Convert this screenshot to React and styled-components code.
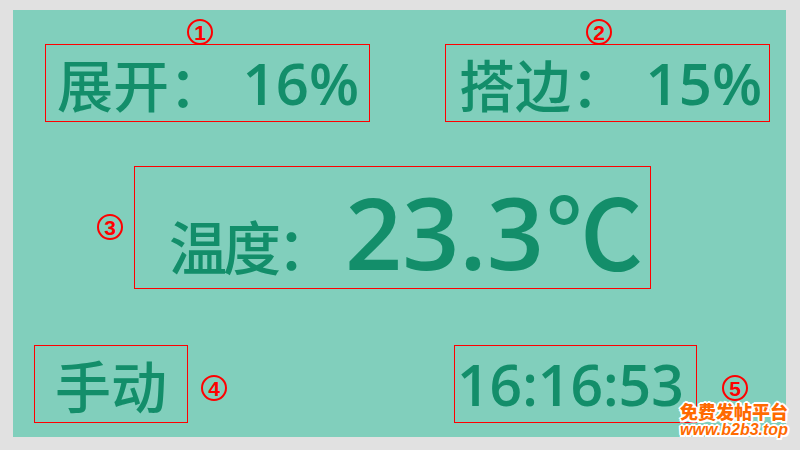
import React from 'react';
import styled, { createGlobalStyle } from 'styled-components';

const GlobalStyle = createGlobalStyle`
  html, body {
    margin: 0;
    padding: 0;
    background: #e1e1e1;
  }
  body {
    font-family: "Open Sans", "Noto Sans CJK SC", sans-serif;
  }
`;

const Page = styled.div`
  width: 800px;
  height: 450px;
  padding: 10px 14px 13px 13px;
  box-sizing: border-box;
  position: relative;
  overflow: hidden;
`;

const Panel = styled.div`
  height: 100%;
  background: #81cfbc;
  color: #138e6a;
  display: flex;
  flex-direction: column;
  padding-top: 34px;
  box-sizing: border-box;
`;

const Row = styled.div`
  display: flex;
  align-items: flex-start;
  gap: ${(p) => p.gap || 0}px;
  padding-left: ${(p) => p.left || 0}px;
  margin-top: ${(p) => p.top || 0}px;
`;

const Box = styled.div`
  position: relative;
  width: ${(p) => p.w}px;
  height: ${(p) => p.h}px;
  border: 1px solid #ff0000;
  box-sizing: border-box;
  display: flex;
  align-items: ${(p) => p.align || 'center'};
  justify-content: ${(p) => p.justify || 'space-between'};
  padding: ${(p) => p.pad || '0'};
  white-space: nowrap;
`;

const Label = styled.span`
  font-family: "Noto Sans CJK SC", sans-serif;
  font-size: ${(p) => p.size || 56}px;
  font-weight: 500;
  line-height: 1;
  letter-spacing: ${(p) => p.spacing || 0}px;
`;

const Value = styled.span`
  font-family: "Open Sans", "Noto Sans CJK SC", sans-serif;
  font-size: ${(p) => p.size || 58}px;
  font-weight: 600;
  line-height: 1;
  margin-left: ${(p) => p.offset || 0}px;
`;

const Degree = styled.span`
  font-family: "Noto Sans CJK SC", sans-serif;
  font-weight: 500;
  font-size: 0.97em;
  margin-left: 2px;
`;

const Badge = styled.span`
  position: absolute;
  left: ${(p) => p.x}px;
  top: ${(p) => p.y}px;
  width: 22px;
  height: 22px;
  border: 2.5px solid #ff0000;
  border-radius: 50%;
  color: #ff0000;
  font-family: "Liberation Sans", sans-serif;
  font-weight: 700;
  font-size: 21px;
  line-height: 23px;
  text-align: center;
`;

const Watermark = styled.div`
  position: absolute;
  right: 12px;
  bottom: 12px;
  display: flex;
  flex-direction: column;
  align-items: center;
  color: #ff6a00;
  font-weight: 900;
  line-height: 1;
  text-shadow: -2px 0 #fff, 2px 0 #fff, 0 -2px #fff, 0 2px #fff,
    -1.5px -1.5px #fff, 1.5px 1.5px #fff, -1.5px 1.5px #fff, 1.5px -1.5px #fff;
`;

const MarkTitle = styled.span`
  font-family: "Noto Sans CJK SC", sans-serif;
  font-size: 18px;
`;

const MarkUrl = styled.span`
  font-family: "Liberation Sans", sans-serif;
  font-style: italic;
  font-size: 16px;
  margin-top: 2px;
`;

export default function App() {
  return (
    <Page>
      <GlobalStyle />
      <Panel>
        <Row left={32} gap={75}>
          <Box w={325} h={78} pad="0 10px 0 11px">
            <Badge x={141} y={-26}>1</Badge>
            <Label>展开：</Label>
            <Value>16%</Value>
          </Box>
          <Box w={325} h={78} pad="0 7px 0 13px">
            <Badge x={140} y={-26}>2</Badge>
            <Label>搭边：</Label>
            <Value>15%</Value>
          </Box>
        </Row>
        <Row left={121} top={44}>
          <Box w={517} h={123} justify="flex-start" align="baseline" pad="12px 0 0 34px">
            <Badge x={-38} y={47}>3</Badge>
            <Label size={58} spacing={-4}>温度：</Label>
            <Value size={100} offset={14}>
              23.3<Degree>℃</Degree>
            </Value>
          </Box>
        </Row>
        <Row left={21} top={56} gap={266}>
          <Box w={154} h={78} justify="center">
            <Badge x={166} y={29}>4</Badge>
            <Label>手动</Label>
          </Box>
          <Box w={243} h={78} justify="flex-start" pad="0 0 0 2px">
            <Badge x={267} y={29}>5</Badge>
            <Value size={57}>16:16:53</Value>
          </Box>
        </Row>
      </Panel>
      <Watermark>
        <MarkTitle>免费发帖平台</MarkTitle>
        <MarkUrl>www.b2b3.top</MarkUrl>
      </Watermark>
    </Page>
  );
}
